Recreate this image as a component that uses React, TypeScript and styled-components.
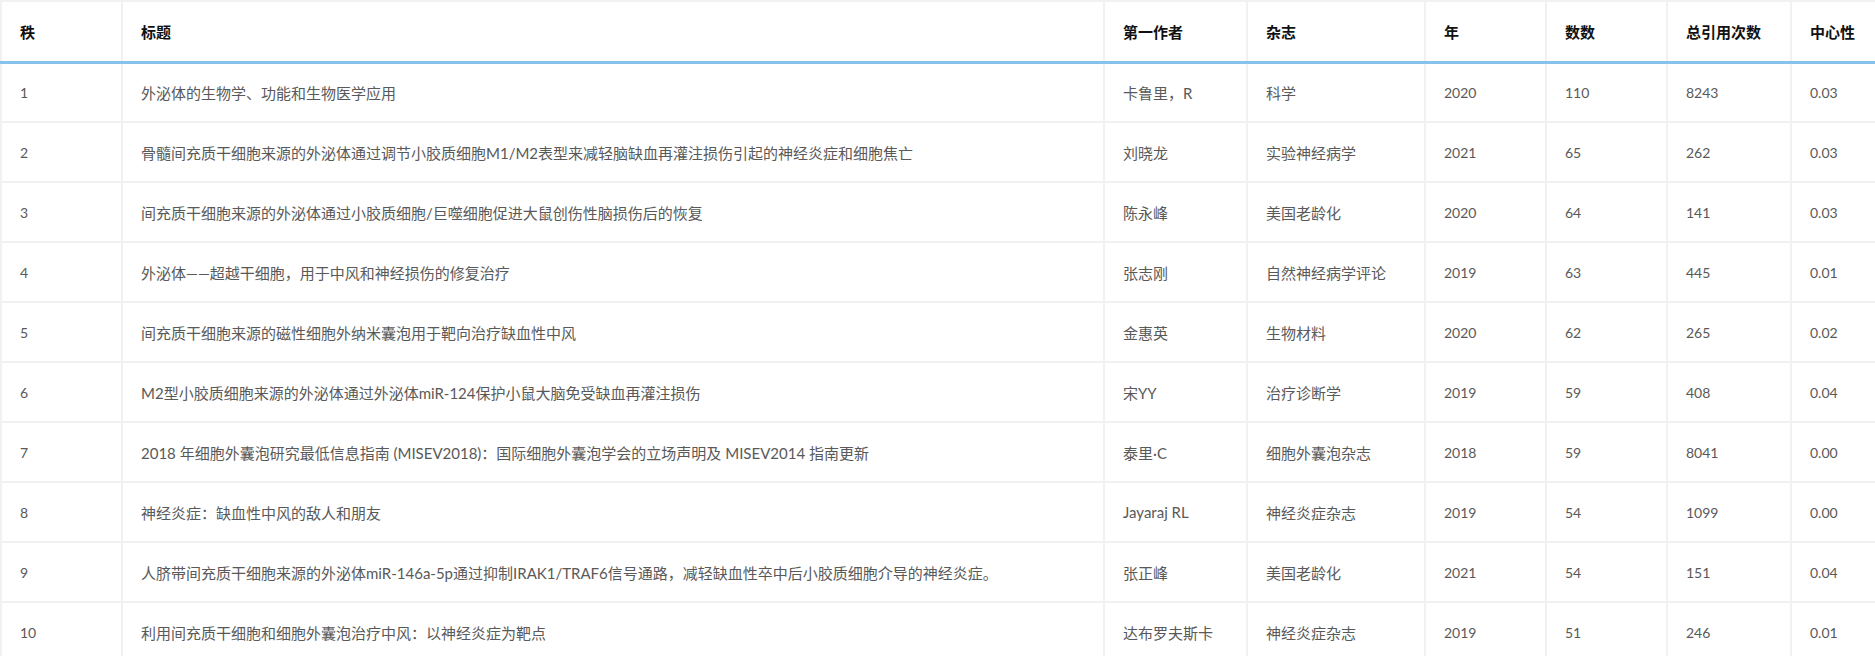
import styled, { createGlobalStyle } from 'styled-components';

const GlobalStyle = createGlobalStyle`
	html, body {
		margin: 0;
		padding: 0;
		background: #ffffff;
		overflow: hidden;
	}
`;

type Paper = {
	rank: number;
	title: string;
	author: string;
	journal: string;
	year: number;
	count: number;
	citations: number;
	centrality: string;
};

const papers: Paper[] = [
	{ rank: 1, title: '外泌体的生物学、功能和生物医学应用', author: '卡鲁里，R', journal: '科学', year: 2020, count: 110, citations: 8243, centrality: '0.03' },
	{ rank: 2, title: '骨髓间充质干细胞来源的外泌体通过调节小胶质细胞M1/M2表型来减轻脑缺血再灌注损伤引起的神经炎症和细胞焦亡', author: '刘晓龙', journal: '实验神经病学', year: 2021, count: 65, citations: 262, centrality: '0.03' },
	{ rank: 3, title: '间充质干细胞来源的外泌体通过小胶质细胞/巨噬细胞促进大鼠创伤性脑损伤后的恢复', author: '陈永峰', journal: '美国老龄化', year: 2020, count: 64, citations: 141, centrality: '0.03' },
	{ rank: 4, title: '外泌体——超越干细胞，用于中风和神经损伤的修复治疗', author: '张志刚', journal: '自然神经病学评论', year: 2019, count: 63, citations: 445, centrality: '0.01' },
	{ rank: 5, title: '间充质干细胞来源的磁性细胞外纳米囊泡用于靶向治疗缺血性中风', author: '金惠英', journal: '生物材料', year: 2020, count: 62, citations: 265, centrality: '0.02' },
	{ rank: 6, title: 'M2型小胶质细胞来源的外泌体通过外泌体miR-124保护小鼠大脑免受缺血再灌注损伤', author: '宋YY', journal: '治疗诊断学', year: 2019, count: 59, citations: 408, centrality: '0.04' },
	{ rank: 7, title: '2018 年细胞外囊泡研究最低信息指南 (MISEV2018)：国际细胞外囊泡学会的立场声明及 MISEV2014 指南更新', author: '泰里·C', journal: '细胞外囊泡杂志', year: 2018, count: 59, citations: 8041, centrality: '0.00' },
	{ rank: 8, title: '神经炎症：缺血性中风的敌人和朋友', author: 'Jayaraj RL', journal: '神经炎症杂志', year: 2019, count: 54, citations: 1099, centrality: '0.00' },
	{ rank: 9, title: '人脐带间充质干细胞来源的外泌体miR-146a-5p通过抑制IRAK1/TRAF6信号通路，减轻缺血性卒中后小胶质细胞介导的神经炎症。', author: '张正峰', journal: '美国老龄化', year: 2021, count: 54, citations: 151, centrality: '0.04' },
	{ rank: 10, title: '利用间充质干细胞和细胞外囊泡治疗中风：以神经炎症为靶点', author: '达布罗夫斯卡', journal: '神经炎症杂志', year: 2019, count: 51, citations: 246, centrality: '0.01' }
];

const columns = [
	{ label: '秩', width: 121 },
	{ label: '标题', width: 982 },
	{ label: '第一作者', width: 143 },
	{ label: '杂志', width: 178 },
	{ label: '年', width: 121 },
	{ label: '数数', width: 121 },
	{ label: '总引用次数', width: 124 },
	{ label: '中心性', width: 85 }
];

const Table = styled.table`
	width: 1875px;
	table-layout: fixed;
	border-collapse: collapse;
	font-family: 'Lato', 'Noto Sans CJK SC', sans-serif;
`;

const HeadCell = styled.th`
	height: 61px;
	padding: 0 18px;
	text-align: left;
	font-size: 15px;
	font-weight: 700;
	color: #111;
	border: 2px solid #f1f1f1;
	border-bottom: 3px solid #86c2ea;
	box-sizing: border-box;
`;

const Cell = styled.td<{ $num?: boolean }>`
	height: 60px;
	padding: 0 18px;
	font-size: ${(props) => (props.$num ? '14px' : '15px')};
	color: #595959;
	border: 2px solid #f1f1f1;
	border-top: none;
	white-space: nowrap;
	overflow: hidden;
	box-sizing: border-box;
`;

const App = () => {
	return (
		<>
			<GlobalStyle />
			<Table>
				<colgroup>
					{columns.map((c) => (
						<col key={c.label} style={{ width: c.width }} />
					))}
				</colgroup>
				<thead>
					<tr>
						{columns.map((c) => (
							<HeadCell key={c.label}>{c.label}</HeadCell>
						))}
					</tr>
				</thead>
				<tbody>
					{papers.map((p) => (
						<tr key={p.rank}>
							<Cell $num>{p.rank}</Cell>
							<Cell>{p.title}</Cell>
							<Cell>{p.author}</Cell>
							<Cell>{p.journal}</Cell>
							<Cell $num>{p.year}</Cell>
							<Cell $num>{p.count}</Cell>
							<Cell $num>{p.citations}</Cell>
							<Cell $num>{p.centrality}</Cell>
						</tr>
					))}
				</tbody>
			</Table>
		</>
	);
};

export default App;
